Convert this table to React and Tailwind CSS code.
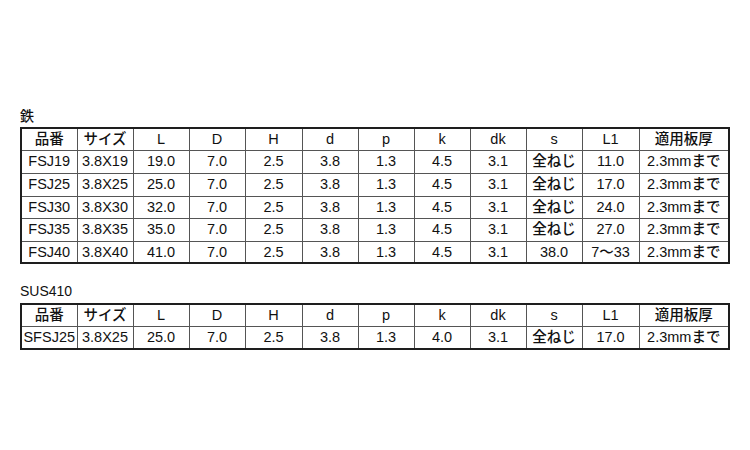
import React from "react";

const header = ["品番", "サイズ", "L", "D", "H", "d", "p", "k", "dk", "s", "L1", "適用板厚"];

const iron = [
  ["FSJ19", "3.8X19", "19.0", "7.0", "2.5", "3.8", "1.3", "4.5", "3.1", "全ねじ", "11.0", "2.3mmまで"],
  ["FSJ25", "3.8X25", "25.0", "7.0", "2.5", "3.8", "1.3", "4.5", "3.1", "全ねじ", "17.0", "2.3mmまで"],
  ["FSJ30", "3.8X30", "32.0", "7.0", "2.5", "3.8", "1.3", "4.5", "3.1", "全ねじ", "24.0", "2.3mmまで"],
  ["FSJ35", "3.8X35", "35.0", "7.0", "2.5", "3.8", "1.3", "4.5", "3.1", "全ねじ", "27.0", "2.3mmまで"],
  ["FSJ40", "3.8X40", "41.0", "7.0", "2.5", "3.8", "1.3", "4.5", "3.1", "38.0", "7～33", "2.3mmまで"],
];

const sus = [
  ["SFSJ25", "3.8X25", "25.0", "7.0", "2.5", "3.8", "1.3", "4.0", "3.1", "全ねじ", "17.0", "2.3mmまで"],
];

const rowHeights = ["h-[22px]", "h-[23px]", "h-[23px]", "h-[22px]", "h-[23px]", "h-[22px]"];

function SpecTable({ rows }) {
  return (
    <table className="table-fixed border-collapse border-2 border-[#1e1e1e] text-[14.5px] leading-none text-[#111] font-medium">
      <colgroup>
        <col className="w-[56px]" />
        <col className="w-[56px]" />
        <col className="w-[56px]" />
        <col className="w-[56px]" />
        <col className="w-[57px]" />
        <col className="w-[56px]" />
        <col className="w-[56px]" />
        <col className="w-[56px]" />
        <col className="w-[56px]" />
        <col className="w-[56px]" />
        <col className="w-[57px]" />
        <col className="w-[90px]" />
      </colgroup>
      <tbody>
        {[header, ...rows].map((r, ri) => (
          <tr key={ri} className={rowHeights[ri]}>
            {r.map((c, ci) => (
              <td
                key={ci}
                className="border border-[#555] p-0 text-center align-middle whitespace-nowrap"
              >
                {c}
              </td>
            ))}
          </tr>
        ))}
      </tbody>
    </table>
  );
}

export default function App() {
  return (
    <div className="w-[750px] h-[450px] bg-white pl-[20px] pt-[108px] font-['Liberation_Sans','Noto_Sans_CJK_JP',sans-serif]">
      <div className="text-[14px] leading-4 h-4 mb-[3px] text-[#111] font-medium">鉄</div>
      <SpecTable rows={iron} />
      <div className="mt-[19px] text-[14px] leading-4 h-4 mb-[4px] text-[#111]">SUS410</div>
      <SpecTable rows={sus} />
    </div>
  );
}
